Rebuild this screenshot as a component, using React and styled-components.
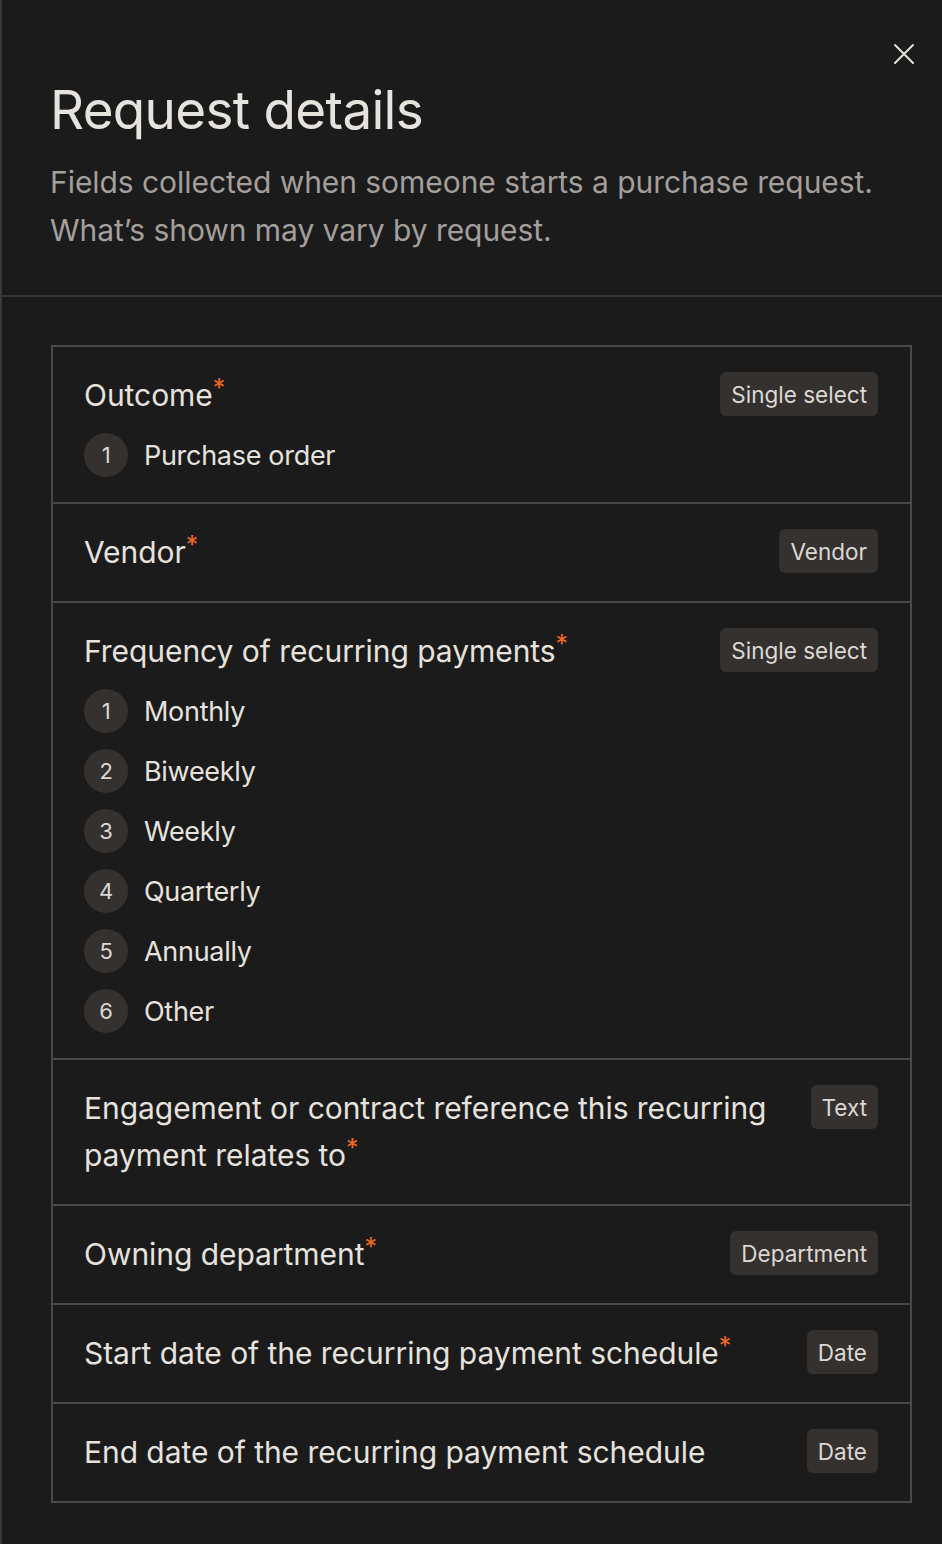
import React from 'react';
import styled, { createGlobalStyle } from 'styled-components';

const GlobalStyle = createGlobalStyle`
  html, body {
    margin: 0;
    padding: 0;
    background: #1b1b1b;
  }
  body {
    font-family: Inter, "Noto Sans", sans-serif;
    -webkit-font-smoothing: antialiased;
  }
`;

const fields = [
  { label: 'Outcome', required: true, type: 'Single select', options: ['Purchase order'] },
  { label: 'Vendor', required: true, type: 'Vendor' },
  {
    label: 'Frequency of recurring payments',
    required: true,
    type: 'Single select',
    options: ['Monthly', 'Biweekly', 'Weekly', 'Quarterly', 'Annually', 'Other'],
  },
  {
    label: 'Engagement or contract reference this recurring payment relates to',
    required: true,
    type: 'Text',
  },
  { label: 'Owning department', required: true, type: 'Department' },
  { label: 'Start date of the recurring payment schedule', required: true, type: 'Date' },
  { label: 'End date of the recurring payment schedule', required: false, type: 'Date' },
];

const CloseIcon = () => (
  <svg width="22" height="22" viewBox="0 0 22 22" fill="none">
    <path d="M2 2L20 20M20 2L2 20" stroke="#e6e2de" strokeWidth="2" strokeLinecap="round" />
  </svg>
);

const App = () => (
  <>
    <GlobalStyle />
    <Panel>
      <Header>
        <CloseButton aria-label="Close">
          <CloseIcon />
        </CloseButton>
        <Title>Request details</Title>
        <Subtitle>
          Fields collected when someone starts a purchase request.
          <br />
          What’s shown may vary by request.
        </Subtitle>
      </Header>
      <Body>
        <FieldList>
          {fields.map((f) => (
            <FieldRow key={f.label}>
              <FieldTop>
                <FieldLabel>
                  {f.label}
                  {f.required && <Required>*</Required>}
                </FieldLabel>
                <TypeBadge>{f.type}</TypeBadge>
              </FieldTop>
              {f.options && (
                <OptionList>
                  {f.options.map((o, i) => (
                    <Option key={o}>
                      <OptionIndex>{i + 1}</OptionIndex>
                      {o}
                    </Option>
                  ))}
                </OptionList>
              )}
            </FieldRow>
          ))}
        </FieldList>
      </Body>
    </Panel>
  </>
);

const Panel = styled.div`
  position: relative;
  min-height: 1544px;
  box-sizing: border-box;
  background: #1b1b1b;
  border-left: 2px solid #3a3939;
`;

const Header = styled.header`
  position: relative;
  padding: 78px 40px 41px 48px;
  border-bottom: 2px solid #363535;
`;

const CloseButton = styled.button`
  position: absolute;
  top: 43px;
  right: 27px;
  width: 22px;
  height: 22px;
  padding: 0;
  border: 0;
  background: none;
  cursor: pointer;
  display: flex;
`;

const Title = styled.h1`
  margin: 0;
  font-size: 53px;
  line-height: 64px;
  font-weight: 400;
  letter-spacing: -0.7px;
  color: #e6e2de;
`;

const Subtitle = styled.p`
  margin: 16px 0 0;
  font-size: 30px;
  line-height: 48px;
  font-weight: 400;
  letter-spacing: -0.05px;
  color: #a39f9b;
`;

const Body = styled.div`
  padding: 48px 30px 44px 49px;
`;

const FieldList = styled.div`
  border: 2px solid #4a4744;
`;

const FieldRow = styled.div`
  padding: 25px 32px 25px 31px;
  & + & {
    border-top: 2px solid #4a4744;
  }
`;

const FieldTop = styled.div`
  display: flex;
  align-items: flex-start;
  justify-content: space-between;
  gap: 40px;
`;

const FieldLabel = styled.div`
  font-size: 30px;
  line-height: 47px;
  letter-spacing: -0.05px;
  color: #e6e2de;
  max-width: 700px;
`;

const Required = styled.span`
  color: #f26a22;
  font-size: 25px;
  vertical-align: 9px;
  line-height: 0;
`;

const TypeBadge = styled.span`
  flex-shrink: 0;
  height: 44px;
  padding: 0 11px;
  display: flex;
  align-items: center;
  border-radius: 6px;
  background: #35312f;
  color: #dcd8d4;
  font-size: 22.5px;
`;

const OptionList = styled.div`
  display: flex;
  flex-direction: column;
  gap: 16px;
  margin-top: 14px;
`;

const Option = styled.div`
  display: flex;
  align-items: center;
  gap: 16px;
  font-size: 27px;
  letter-spacing: -0.3px;
  color: #e6e2de;
`;

const OptionIndex = styled.span`
  width: 44px;
  height: 44px;
  border-radius: 50%;
  background: #35312f;
  display: flex;
  align-items: center;
  justify-content: center;
  font-size: 22px;
  color: #dcd8d4;
`;

export default App;
